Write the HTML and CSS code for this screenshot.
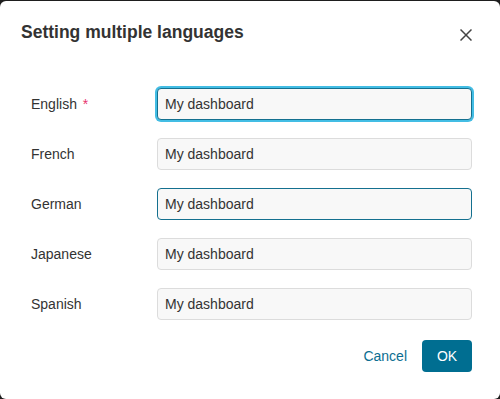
FILE: index.html
```html
<!DOCTYPE html>
<html>
<head>
<meta charset="utf-8">
<link rel="stylesheet" href="styles.css">
</head>
<body>
<div class="modal">
  <div class="modal-header">
    <h2 class="modal-title">Setting multiple languages</h2>
    <button class="close" aria-label="Close">
      <svg width="12" height="12" viewBox="0 0 12 12"><path d="M0.5 0.5 L11.5 11.5 M11.5 0.5 L0.5 11.5" stroke="#444" stroke-width="1.5" fill="none"/></svg>
    </button>
  </div>
  <div class="modal-body">
    <div class="row">
      <label class="label">English <span class="req">*</span></label>
      <div class="input focused">My dashboard</div>
    </div>
    <div class="row">
      <label class="label">French</label>
      <div class="input">My dashboard</div>
    </div>
    <div class="row">
      <label class="label">German</label>
      <div class="input active">My dashboard</div>
    </div>
    <div class="row">
      <label class="label">Japanese</label>
      <div class="input">My dashboard</div>
    </div>
    <div class="row">
      <label class="label">Spanish</label>
      <div class="input">My dashboard</div>
    </div>
  </div>
  <div class="modal-footer">
    <button class="btn-link">Cancel</button>
    <button class="btn-primary">OK</button>
  </div>
</div>
</body>
</html>
```
FILE: styles.css
```css
html, body {
  margin: 0;
  padding: 0;
  background: #1e1e1e;
  font-family: "Liberation Sans", Arial, sans-serif;
  color: #333;
}
.modal {
  margin-top: 1px;
  width: 500px;
  height: 398px;
  background: #fff;
  border-radius: 6px;
  box-sizing: border-box;
  overflow: hidden;
}
.modal-header {
  display: flex;
  align-items: flex-start;
  justify-content: space-between;
  padding: 20px 28px 0 21px;
  height: 28px;
}
.modal-title {
  margin: 0;
  font-size: 17.5px;
  font-weight: bold;
  line-height: 22px;
  color: #333;
  margin-top: 0;
}
.close {
  border: 0;
  background: none;
  padding: 0;
  width: 12px;
  height: 12px;
  display: flex;
  margin-top: 8px;
}
.modal-body {
  display: flex;
  flex-direction: column;
  gap: 18px;
  padding: 39px 28px 0 31px;
}
.row {
  display: flex;
  align-items: center;
  height: 32px;
}
.label {
  width: 126px;
  font-size: 14px;
  color: #333;
}
.req {
  color: #e8336f;
  margin-left: 2px;
}
.input {
  flex: 1;
  height: 32px;
  box-sizing: border-box;
  border: 1px solid #dcdcdc;
  border-radius: 4px;
  background: #f8f8f8;
  padding: 0 7px;
  font-size: 14px;
  line-height: 30px;
  color: #333;
}
.input.focused {
  border-color: #14708f;
  box-shadow: 0 0 0 2px #43bde4;
}
.input.active {
  border-color: #14708f;
}
.modal-footer {
  display: flex;
  justify-content: flex-end;
  align-items: center;
  gap: 15px;
  padding: 20px 28px 0 0;
}
.btn-link {
  border: 0;
  background: none;
  padding: 0;
  font-family: inherit;
  font-size: 14px;
  color: #0b6e91;
}
.btn-primary {
  border: 0;
  background: #006e91;
  color: #fff;
  border-radius: 4px;
  width: 50px;
  height: 32px;
  font-family: inherit;
  font-size: 14px;
  padding: 0;
}
```
